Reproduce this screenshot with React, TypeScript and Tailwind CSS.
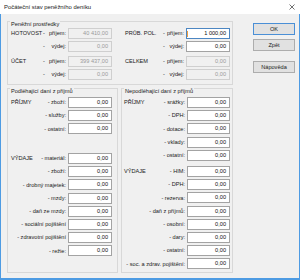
import React from "react";

/* ------------------------------- data ------------------------------- */

type Row = { cat?: string; label: string; value?: string; gap?: string };

const leftRows: Row[] = [
  { cat: "PŘÍJMY", label: "- zboží:" },
  { label: "- služby:" },
  { label: "- ostatní:" },
  { cat: "VÝDAJE", label: "- materiál:", gap: "mt-[18.6px]" },
  { label: "- zboží:" },
  { label: "- drobný majetek:" },
  { label: "- mzdy:" },
  { label: "- daň ze mzdy:" },
  { label: "- sociální pojištění" },
  { label: "- zdravotní pojištění" },
  { label: "- režie:" },
];

const rightRows: Row[] = [
  { cat: "PŘÍJMY", label: "- srážky:" },
  { label: "- DPH:" },
  { label: "- dotace:" },
  { label: "- vklady:" },
  { label: "- ostatní:" },
  { cat: "VÝDAJE", label: "- HIM:", gap: "mt-[5.2px]" },
  { label: "- DPH:" },
  { label: "- rezerva:" },
  { label: "- daň z příjmů:" },
  { label: "- osobní:" },
  { label: "- dary:" },
  { label: "- ostatní:" },
  { label: "- soc. a zdrav. pojištění:" },
];

/* ----------------------------- pieces ----------------------------- */

function Field({
  value = "0,00",
  disabled,
  focused,
  w = "w-[44px]",
}: {
  value?: string;
  disabled?: boolean;
  focused?: boolean;
  w?: string;
}) {
  const look = disabled
    ? "bg-[#f0f0f0] border-[#cfcfcf] text-[#9a9a9a]"
    : focused
      ? "bg-white border-[#4c86c2] text-[#111]"
      : "bg-white border-[#a3a3a3] text-[#111]";
  return (
    <div
      className={`relative ${w} h-[11px] shrink-0 border ${look} flex items-center justify-end pr-[3px] leading-[9px]`}>
      {focused && (
        <span className="absolute left-0 top-[2px] w-[1px] h-[6px] bg-[#f0a040]" />
      )}
      {value}
    </div>
  );
}

function GroupBox({
  title,
  className,
  children,
}: {
  title: string;
  className: string;
  children: React.ReactNode;
}) {
  return (
    <div className={`relative border border-[#d8d8d8] ${className}`}>
      <span className="absolute left-[2px] top-[-2px] px-[1px] bg-[#f0f0f0] leading-[8px]">
        {title}
      </span>
      {children}
    </div>
  );
}

function Dash({ text, w }: { text: string; w: string }) {
  return (
    <div className={`${w} flex justify-between whitespace-nowrap`}>
      <span>-</span>
      <span>{text}</span>
    </div>
  );
}

function TaxRows({
  rows,
  labelW,
  fieldW,
}: {
  rows: Row[];
  labelW: string;
  fieldW: string;
}) {
  return (
    <div className="flex flex-col">
      {rows.map((r, i) => (
        <div
          key={i}
          className={`flex items-center h-[11px] ${i === 0 ? "" : r.gap ?? "mt-[2.2px]"}`}>
          <div className={`${labelW} flex justify-between whitespace-nowrap`}>
            <span>{r.cat ?? ""}</span>
            <span>{r.label}</span>
          </div>
          <div className="ml-[2px]">
            <Field w={fieldW} />
          </div>
        </div>
      ))}
    </div>
  );
}

function Btn({ children, primary }: { children: string; primary?: boolean }) {
  return (
    <div
      className={`h-[12px] w-[42px] flex items-center justify-center bg-[#e1e1e1] border ${
        primary ? "border-[#4a8fd6]" : "border-[#adadad]"
      }`}>
      {children}
    </div>
  );
}

/* ------------------------------ app ------------------------------ */

export default function App() {
  return (
    <div className="w-[300px] h-[280px] flex flex-col bg-white text-[#1a1a1a] text-[5.6px] font-['Liberation_Sans',Arial,sans-serif]">
      {/* title bar */}
      <div className="h-[14px] shrink-0 flex items-center justify-between pl-[4px] pr-[5px] text-[5.9px]">
        <span>Počáteční stav peněžního deníku</span>
        <svg width="6" height="6" viewBox="0 0 6 6">
          <path d="M0.5 0.5 L5.5 5.5 M5.5 0.5 L0.5 5.5" stroke="#333" strokeWidth="0.7" />
        </svg>
      </div>

      {/* body */}
      <div className="flex-1 flex bg-[#f0f0f0] border-l border-r border-b-2 border-[#4d9be3] pl-[6px] pr-[4px]">
        <div className="w-[226px] pt-[7px]">
          {/* peněžní prostředky */}
          <GroupBox title="Peněžní prostředky" className="h-[64px] pt-[6px] pl-[3px]">
            <div className="flex items-center h-[11px]">
              <div className="w-[32px] whitespace-nowrap">HOTOVOST</div>
              <Dash text="příjem:" w="w-[23px]" />
              <div className="ml-[2px]">
                <Field value="40 410,00" disabled />
              </div>
              <div className="ml-[13px] w-[38px] whitespace-nowrap">PRŮB. POL.</div>
              <Dash text="příjem:" w="w-[21px]" />
              <div className="ml-[2px]">
                <Field value="1 000,00" focused />
              </div>
            </div>
            <div className="flex items-center h-[11px] mt-[2.2px]">
              <div className="w-[32px]" />
              <Dash text="výdej:" w="w-[23px]" />
              <div className="ml-[2px]">
                <Field disabled />
              </div>
              <div className="ml-[13px] w-[38px]" />
              <Dash text="výdej:" w="w-[21px]" />
              <div className="ml-[2px]">
                <Field />
              </div>
            </div>
            <div className="flex items-center h-[11px] mt-[3.8px]">
              <div className="w-[32px]">ÚČET</div>
              <Dash text="příjem:" w="w-[23px]" />
              <div className="ml-[2px]">
                <Field value="399 437,00" disabled />
              </div>
              <div className="ml-[13px] w-[38px]">CELKEM</div>
              <Dash text="příjem:" w="w-[21px]" />
              <div className="ml-[2px]">
                <Field disabled />
              </div>
            </div>
            <div className="flex items-center h-[11px] mt-[2.2px]">
              <div className="w-[32px]" />
              <Dash text="výdej:" w="w-[23px]" />
              <div className="ml-[2px]">
                <Field disabled />
              </div>
              <div className="ml-[13px] w-[38px]" />
              <Dash text="výdej:" w="w-[21px]" />
              <div className="ml-[2px]">
                <Field disabled />
              </div>
            </div>
          </GroupBox>

          {/* daně */}
          <div className="mt-[3px] flex gap-[3px]">
            <GroupBox title="Podléhající daní z příjmů" className="w-[111px] h-[185px] pt-[8px] pl-[3px]">
              <TaxRows rows={leftRows} labelW="w-[55px]" fieldW="w-[44px]" />
            </GroupBox>
            <GroupBox title="Nepodléhající daní z příjmů" className="w-[112px] h-[185px] pt-[8px] pl-[2px]">
              <TaxRows rows={rightRows} labelW="w-[61px]" fieldW="w-[43px]" />
            </GroupBox>
          </div>
        </div>

        {/* buttons */}
        <div className="ml-[20px] pt-[9px] flex flex-col">
          <Btn primary>OK</Btn>
          <div className="mt-[4px]">
            <Btn>Zpět</Btn>
          </div>
          <div className="mt-[10px]">
            <Btn>Nápověda</Btn>
          </div>
        </div>
      </div>
    </div>
  );
}
